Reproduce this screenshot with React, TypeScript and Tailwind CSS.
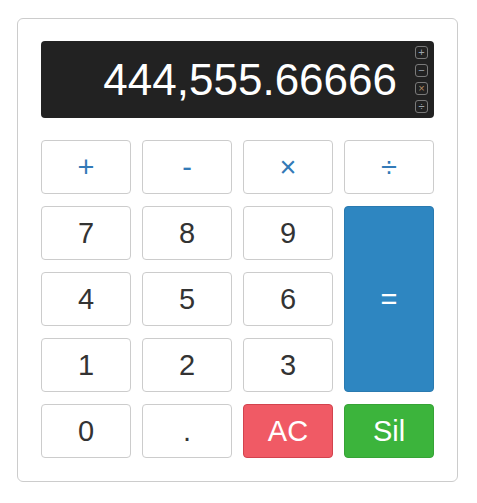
import React from 'react';

const font = { fontFamily: '"Liberation Sans", Arial, sans-serif' };

type Key = {
  label: string;
  kind: 'num' | 'op' | 'eq' | 'clear' | 'del';
  span?: boolean;
};

const keys: Key[] = [
  { label: '+', kind: 'op' },
  { label: '-', kind: 'op' },
  { label: '×', kind: 'op' },
  { label: '÷', kind: 'op' },
  { label: '7', kind: 'num' },
  { label: '8', kind: 'num' },
  { label: '9', kind: 'num' },
  { label: '=', kind: 'eq', span: true },
  { label: '4', kind: 'num' },
  { label: '5', kind: 'num' },
  { label: '6', kind: 'num' },
  { label: '1', kind: 'num' },
  { label: '2', kind: 'num' },
  { label: '3', kind: 'num' },
  { label: '0', kind: 'num' },
  { label: '.', kind: 'num' },
  { label: 'AC', kind: 'clear' },
  { label: 'Sil', kind: 'del' },
];

const keyStyles: Record<Key['kind'], string> = {
  num: 'bg-white border-[#ccc] text-[#333]',
  op: 'bg-white border-[#ccc] text-[#337ab7]',
  eq: 'bg-[#2e86c1] border-[#2a7ab0] text-white',
  clear: 'bg-[#f05a65] border-[#d2434e] text-white',
  del: 'bg-[#3cb43c] border-[#36a336] text-white',
};

const opIcons = [
  { sym: '+', color: 'text-[#9aa4ad]' },
  { sym: '−', color: 'text-[#9aa4ad]' },
  { sym: '×', color: 'text-[#b08a62]' },
  { sym: '÷', color: 'text-[#9aa4ad]' },
];

export default function App() {
  return (
    <div className="pl-[17px] pt-[18px]" style={font}>
      <div className="w-[441px] rounded-[6px] border border-[#ccc] bg-white px-[23px] pt-[22px] pb-[23px]">
        {/* Display */}
        <div className="flex h-[77px] items-center justify-end rounded-[4px] bg-[#222] pr-[6px]">
          <span className="text-[44px] leading-none text-white">444,555.66666</span>
          <div className="ml-[18px] flex flex-col gap-[5px]">
            {opIcons.map((o) => (
              <div
                key={o.sym}
                className={`flex h-[13px] w-[13px] items-center justify-center rounded-[3px] border border-[#7a7a7a] text-[11px] leading-none ${o.color}`}
              >
                {o.sym}
              </div>
            ))}
          </div>
        </div>

        {/* Keypad */}
        <div className="mt-[22px] grid grid-cols-4 auto-rows-[54px] gap-x-[11px] gap-y-[12px]">
          {keys.map((k) => (
            <button
              key={k.label}
              className={`flex items-center justify-center rounded-[4px] border text-[29px] leading-none ${keyStyles[k.kind]} ${
                k.span ? 'row-span-3' : ''
              } ${k.kind === 'op' ? 'text-[26px]' : ''}`}
            >
              {k.label}
            </button>
          ))}
        </div>
      </div>
    </div>
  );
}
